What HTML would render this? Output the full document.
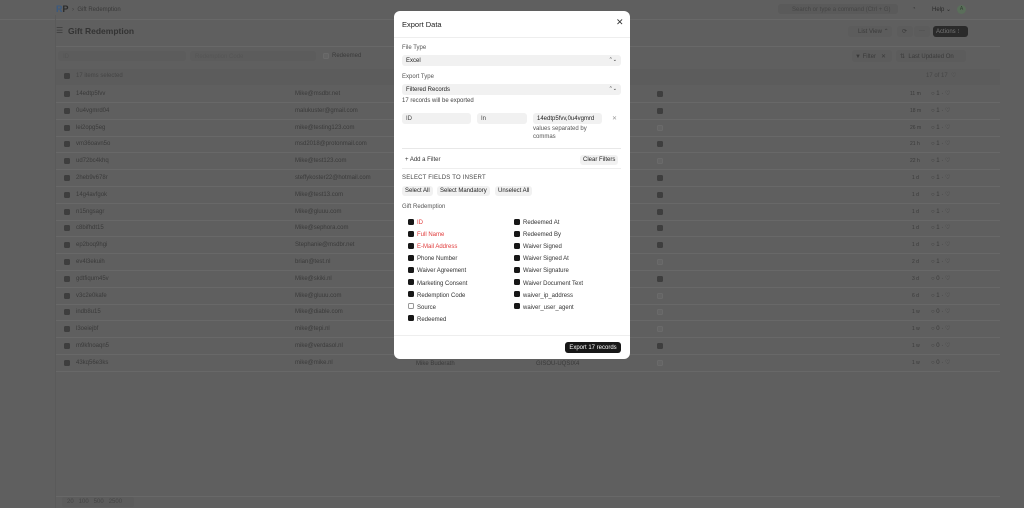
<!DOCTYPE html><html style="background:#5f5f5f"><head><style>
*{margin:0;padding:0;box-sizing:border-box;line-height:1}
body{width:1024px;height:508px;overflow:hidden;background:#5f5f5f;font-family:"Liberation Sans",sans-serif;position:relative;color:#333}
.a{position:absolute;white-space:nowrap}
.t{font-size:6px;color:#3a3a3a}
.cb{position:absolute;width:6px;height:6px;border-radius:1.5px;background:#3e3e3e}
.cbo{position:absolute;width:6px;height:6px;border-radius:1.5px;background:#646464;border:1px solid #6a6a6a}
.line{position:absolute;left:56px;width:944px;height:1px;background:#686868}
#m{position:absolute;left:394px;top:11px;width:236px;height:348px;background:#fff;border-radius:6px;color:#222}
#m .a{font-size:6px}
.inp{position:absolute;background:#f1f1f1;border-radius:3px;height:11px;font-size:6px;padding:0 4px;color:#222;display:flex;align-items:center;justify-content:space-between}
.btn{position:absolute;background:#f1f1f1;border-radius:3px;height:10px;font-size:6px;padding:0 3px;color:#222;display:flex;align-items:center}
.mc{position:absolute;width:6px;height:6px;border-radius:1.5px;background:#171717}
.mco{position:absolute;width:6px;height:6px;border-radius:1.5px;border:1px solid #999;background:#fff}
</style></head><body>
<div class="a" style="left:56px;top:5px;font-size:9px;font-weight:bold;color:#3a5a80">R<span style="color:#2a2a2a">P</span></div>
<div class="a t" style="left:72px;top:7px">›&nbsp; Gift Redemption</div>
<div class="a" style="width:120px;height:10px;background:#5a5a5a;border-radius:3px;left:778px;top:4px"></div>
<div class="a t" style="left:792px;top:7px;color:#454545">Search or type a command (Ctrl + G)</div>
<div class="a t" style="left:912px;top:6px">◔</div>
<div class="a t" style="left:932px;top:7px;color:#2a2a2a">Help ⌄</div>
<div class="a" style="left:957px;top:5px;width:9px;height:9px;border-radius:50%;background:#5a6e5a;font-size:5px;text-align:center;line-height:9px;color:#2f3f2f">A</div>
<div class="line" style="left:0;width:1024px;top:19px"></div>
<div class="a" style="left:56px;top:27px;font-size:8px;color:#3a3a3a">☰</div>
<div class="a" style="left:68px;top:27px;font-size:8.5px;font-weight:bold;color:#333">Gift Redemption</div>
<div class="a" style="left:848px;top:26px;width:44px;height:11px;background:#5c5c5c;border-radius:3px"></div>
<div class="a t" style="left:858px;top:29px">List View ⌃</div>
<div class="a" style="left:897px;top:26px;width:16px;height:11px;background:#5c5c5c;border-radius:3px"></div>
<div class="a" style="left:914px;top:26px;width:16px;height:11px;background:#5c5c5c;border-radius:3px"></div>
<div class="a t" style="left:902px;top:29px">⟳</div><div class="a t" style="left:919px;top:28px">···</div>
<div class="a" style="left:933px;top:26px;width:35px;height:11px;background:#2a2a2a;border-radius:3px;font-size:6px;color:#777;display:flex;align-items:center;padding-left:3px">Actions ⁝</div>
<div class="line" style="top:46px"></div>
<div class="a" style="left:58px;top:51px;width:128px;height:10px;background:#5c5c5c;border-radius:3px"></div>
<div class="a" style="left:190px;top:51px;width:126px;height:10px;background:#5c5c5c;border-radius:3px"></div>
<div class="a t" style="left:63px;top:54px;color:#555">ID</div>
<div class="a t" style="left:195px;top:54px;color:#555">Redemption Code</div>
<div class="cbo" style="left:323px;top:53px"></div><div class="a t" style="left:332px;top:53px">Redeemed</div>
<div class="a" style="left:852px;top:50px;width:40px;height:12px;background:#5c5c5c;border-radius:3px"></div>
<div class="a t" style="left:855px;top:54px">▼ Filter &nbsp;&nbsp;✕</div>
<div class="a" style="left:896px;top:50px;width:70px;height:12px;background:#5c5c5c;border-radius:3px"></div>
<div class="a t" style="left:900px;top:54px">⇅ &nbsp;Last Updated On</div>
<div class="a" style="left:56px;top:69px;width:944px;height:16px;background:#5c5c5c"></div>
<div class="cb" style="left:64px;top:73px"></div><div class="a t" style="left:76px;top:73px;color:#454545">17 items selected</div>
<div class="a t" style="left:926px;top:73px;color:#454545">17 of 17 &nbsp;♡</div>
<div id="rows"></div>
<div class="a" style="left:56px;top:496px;width:944px;height:1px;background:#686868"></div>
<div class="a" style="left:62px;top:497px;width:72px;height:10px;background:#5c5c5c;border-radius:2px"></div>
<div class="a t" style="left:67px;top:499px;color:#454545">20 &nbsp;&nbsp;100 &nbsp;&nbsp;500 &nbsp;&nbsp;2500</div>
<div class="a" style="left:55px;top:15px;width:1px;height:493px;background:#5a5a5a"></div>

<div id="m">
<div class="a" style="left:8px;top:10px;font-size:7.5px;color:#222">Export Data</div>
<div class="a" style="left:222px;top:7px;font-size:9px;color:#333">✕</div>
<div class="a" style="left:0;top:26px;width:236px;height:1px;background:#eee"></div>
<div class="a" style="left:8px;top:34px;color:#555">File Type</div>
<div class="inp" style="left:8px;top:44px;width:219px"><span>Excel</span><span style="font-size:5px">⌃⌄</span></div>
<div class="a" style="left:8px;top:63px;color:#555">Export Type</div>
<div class="inp" style="left:8px;top:73px;width:219px"><span>Filtered Records</span><span style="font-size:5px">⌃⌄</span></div>
<div class="a" style="left:8px;top:87px;color:#444">17 records will be exported</div>
<div class="inp" style="left:8px;top:102px;width:69px;color:#444">ID</div>
<div class="inp" style="left:83px;top:102px;width:50px;color:#444">In</div>
<div class="inp" style="left:139px;top:102px;width:69px">14edtp5fvv,0u4vgmrd</div>
<div class="a" style="left:218px;top:105px;color:#999">✕</div>
<div class="a" style="left:139px;top:115px;color:#555">values separated by</div>
<div class="a" style="left:139px;top:123px;color:#555">commas</div>
<div class="a" style="left:8px;top:137px;width:219px;height:1px;background:#e8e8e8"></div>
<div class="a" style="left:11px;top:146px;color:#333">+ Add a Filter</div>
<div class="btn" style="left:186px;top:144px">Clear Filters</div>
<div class="a" style="left:8px;top:157px;width:219px;height:1px;background:#eee"></div>
<div class="a" style="left:8px;top:164px;color:#444;letter-spacing:.2px">SELECT FIELDS TO INSERT</div>
<div class="btn" style="left:8px;top:175px">Select All</div>
<div class="btn" style="left:43px;top:175px">Select Mandatory</div>
<div class="btn" style="left:101px;top:175px">Unselect All</div>
<div class="a" style="left:8px;top:193px;color:#555">Gift Redemption</div>
<div id="f"></div>
<div class="a" style="left:0;top:324px;width:236px;height:1px;background:#eee"></div>
<div class="a" style="left:171px;top:331px;width:56px;height:11px;background:#171717;border-radius:3px;color:#fff;font-size:6px;display:flex;align-items:center;justify-content:center">Export 17 records</div>
</div>
<script>
var R=[["14edtp5fvv","Mike@msdbr.net","11 m",1,1],["0u4vgmrd04","malukuster@gmail.com","18 m",1,1],["lei2opg5eg","mike@testing123.com","26 m",0,1],["vm36oavn5o","msd2018@protonmail.com","21 h",1,1],["ud72bc4khq","Mike@test123.com","22 h",0,1],["2heb9v678r","steffykoster22@hotmail.com","1 d",1,1],["14g4avfgok","Mike@test13.com","1 d",1,1],["n15ngsagr","Mike@gluuu.com","1 d",1,1],["c8bifhdt15","Mike@sephora.com","1 d",1,1],["ep2boq9hgi","Stephanie@msdbr.net","1 d",1,1],["ev4l3ekuih","brian@test.nl","2 d",0,1],["gdtfiqum45v","Mike@skiki.nl","3 d",1,0],["v3c2e0kafe","Mike@gluuu.com","6 d",0,1],["indb8u15","Mike@diable.com","1 w",0,0],["l3oeiejbf","mike@tepi.nl","1 w",0,0],["m9kfnoaqn5","mike@verdasol.nl","1 w",1,0],["43kq56e3ks","mike@mike.nl","1 w",0,0]];
var h="";R.forEach(function(r,i){var y=91+i*16.8;
h+='<div class="line" style="top:'+(y+11)+'px"></div><div class="cb" style="left:64px;top:'+y+'px"></div><div class="a t" style="left:76px;top:'+y+'px">'+r[0]+'</div><div class="a t" style="left:295px;top:'+y+'px">'+r[1]+'</div>'+(r[3]?'<div class="cb" style="left:657px;top:'+y+'px"></div>':'<div class="cbo" style="left:657px;top:'+y+'px"></div>')+'<div class="a t" style="left:'+(918-r[2].length*2)+'px;top:'+(y+1)+'px;font-size:5px">'+r[2]+'</div><div class="a t" style="left:931px;top:'+y+'px">○ '+r[4]+' · ♡</div>';});
h+='<div class="a t" style="left:416px;top:361px">Mike Buderath</div><div class="a t" style="left:536px;top:361px">GISOU-UQSIX4</div>';
document.getElementById("rows").innerHTML=h;
var L=[["ID",1,1],["Full Name",1,1],["E-Mail Address",1,1],["Phone Number",1,0],["Waiver Agreement",1,0],["Marketing Consent",1,0],["Redemption Code",1,0],["Source",0,0],["Redeemed",1,0]];
var Rr=["Redeemed At","Redeemed By","Waiver Signed","Waiver Signed At","Waiver Signature","Waiver Document Text","waiver_ip_address","waiver_user_agent"];
var f="";L.forEach(function(l,i){var y=209+i*12.1;f+='<div class="'+(l[1]?'mc':'mco')+'" style="left:14px;top:'+(y-1.5)+'px"></div><div class="a" style="left:23px;top:'+y+'px;color:'+(l[2]?'#e03b3b':'#333')+'">'+l[0]+'</div>';});
Rr.forEach(function(l,i){var y=209+i*12.1;f+='<div class="mc" style="left:120px;top:'+(y-1.5)+'px"></div><div class="a" style="left:129px;top:'+y+'px;color:#333">'+l+'</div>';});
document.getElementById("f").innerHTML=f;
</script>
</body></html>
